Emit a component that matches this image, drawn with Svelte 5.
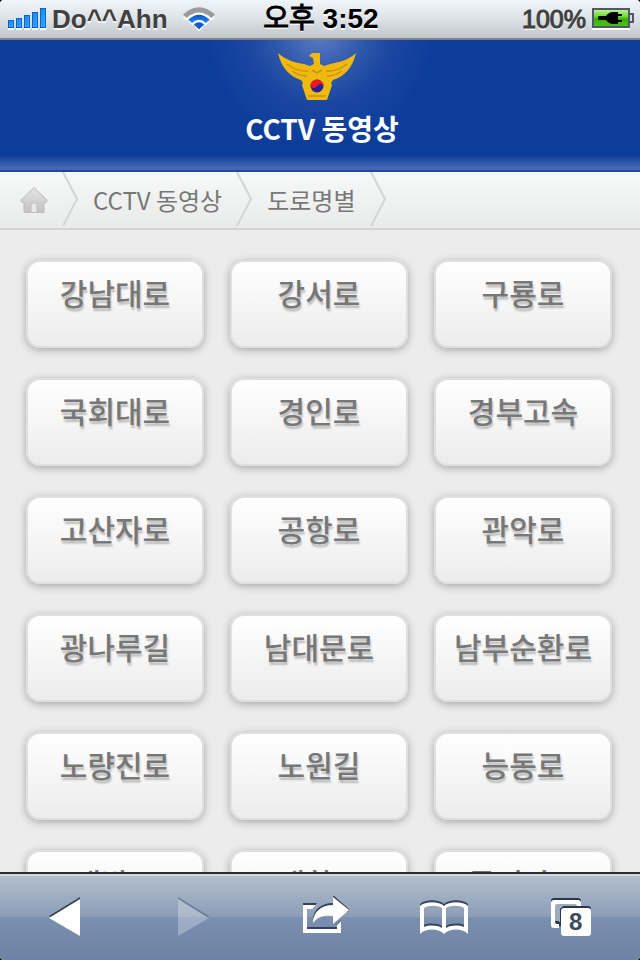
<script>
  const roads = [
    '강남대로', '강서로', '구룡로',
    '국회대로', '경인로', '경부고속',
    '고산자로', '공항로', '관악로',
    '광나루길', '남대문로', '남부순환로',
    '노량진로', '노원길', '능동로',
    '대방로', '대학로', '독서당로'
  ];
</script>

<div class="screen">
  <div class="status">
    <div class="carrier">
      <svg width="40" height="22" viewBox="0 0 40 22" aria-hidden="true">
        <defs>
          <linearGradient id="bars" x1="0" y1="0" x2="1" y2="1">
            <stop offset="0" stop-color="#1482ee" />
            <stop offset="1" stop-color="#30b4fa" />
          </linearGradient>
        </defs>
        <g fill="#fff">
          <rect x="0" y="20" width="6" height="2" /><rect x="8" y="20" width="6" height="2" />
          <rect x="16" y="20" width="6" height="2" /><rect x="24" y="20" width="6" height="2" />
          <rect x="32" y="20" width="6" height="2" />
        </g>
        <g fill="url(#bars)" stroke="#0d63cf">
          <rect x=".5" y="12.5" width="5" height="7" />
          <rect x="8.5" y="10.5" width="5" height="9" />
          <rect x="16.5" y="7.5" width="5" height="12" />
          <rect x="24.5" y="4.5" width="5" height="15" />
          <rect x="32.5" y=".5" width="5" height="19" />
        </g>
      </svg>
      <span class="name">Do^^Ahn</span>
      <svg width="34" height="26" viewBox="0 0 34 26" aria-hidden="true">
        <defs>
          <linearGradient id="wave" x1="0" y1="0" x2="0" y2="1">
            <stop offset="0" stop-color="#0b55c4" />
            <stop offset="1" stop-color="#1b8bff" />
          </linearGradient>
        </defs>
        <g fill="#fff" transform="translate(0 2)">
          <path d="M1 9 Q17 -6 33 9 L29 13 Q17 2 5 13Z" />
          <path d="M7 14 Q17 4 27 14 L23.5 17.5 Q17 11 10.5 17.5Z" />
          <path d="M12.5 19 Q17 14.5 21.5 19 L17 23.5Z" />
        </g>
        <path d="M1 8.5 Q17 -6 33 8.5 L29.5 12 Q17 1 4.5 12Z" fill="#9b9b9b" />
        <path d="M6.5 13.5 Q17 4 27.5 13.5 L24 17 Q17 10.5 10 17Z" fill="url(#wave)" />
        <path d="M12 18.5 Q17 14 22 18.5 L17 23.5Z" fill="#0f5cd0" />
      </svg>
    </div>
    <div class="time"><span class="ampm">오후</span> 3:52</div>
    <div class="power">
      <span>100%</span>
      <svg width="42" height="22" viewBox="0 0 42 22" aria-hidden="true">
        <defs>
          <linearGradient id="charge" x1="0" y1="0" x2="0" y2="1">
            <stop offset="0" stop-color="#c4f99c" />
            <stop offset=".45" stop-color="#65d52c" />
            <stop offset=".55" stop-color="#35b000" />
            <stop offset="1" stop-color="#4fc71c" />
          </linearGradient>
        </defs>
        <rect x="0" y="20" width="38" height="2" fill="#fff" />
        <rect x="1" y="1" width="36" height="18" fill="url(#charge)" stroke="#51566a" stroke-width="2" />
        <path d="M38 6h3v8h-3" fill="#d7dce0" stroke="#51566a" stroke-width="2" />
        <path d="M6 9Q6 8 8 8H14Q17 4 21 4H26V6H30V8H26V12H30V14H26V16H21Q17 16 14 12H8Q6 12 6 11Z" fill="#000" />
      </svg>
    </div>
  </div>

  <header>
    <svg width="80" height="50" viewBox="0 0 80 50" aria-hidden="true">
      <path d="M1 1C10 9 20 11 27 12L33 14 37 12 36 6 32 4 35 1 43 1V12L47 14 53 12C62 10 70 9 79 1C76 15 67 25 56 28L54 31 55 33 50 48H30L25 33 26 31 24 28C13 25 4 15 1 1Z" fill="#f0b90f" />
      <path d="M10 12Q20 20 31 19M15 19Q22 24 30 24M70 12Q60 20 49 19M65 19Q58 24 50 24M35 18L40 21 45 18M31 44H49" fill="none" stroke="#c8940e" stroke-width="1.5" />
      <circle cx="40" cy="34" r="6.5" fill="#25219a" />
      <path d="M33.5 34A6.5 6.5 0 0 1 46.5 34Q43 30 40 34T33.5 34Z" fill="#ed171f" />
    </svg>
    <h1>CCTV 동영상</h1>
  </header>

  <nav class="crumbs">
    <a class="home" href="#home" aria-label="Home">
      <svg width="30" height="28" viewBox="0 0 30 28" aria-hidden="true">
        <defs>
          <linearGradient id="house" x1="0" y1="0" x2="0" y2="1">
            <stop offset="0" stop-color="#e4e4e4" />
            <stop offset="1" stop-color="#c2c2c2" />
          </linearGradient>
        </defs>
        <path d="M15 1.5L28.5 14.5 27 16.5H25V26.5H5V16.5H3L1.5 14.5Z" fill="url(#house)" stroke="#bdbdbd" />
        <path d="M12 26V17H18V26" fill="#e9e9e9" stroke="#bdbdbd" />
      </svg>
    </a>
    <svg class="sep" width="18" height="54" viewBox="0 0 18 54" aria-hidden="true"><path d="M1 0L15 27 1 54" /></svg>
    <a href="#cctv">CCTV 동영상</a>
    <svg class="sep" width="18" height="54" viewBox="0 0 18 54" aria-hidden="true"><path d="M1 0L15 27 1 54" /></svg>
    <a href="#roads">도로명별</a>
    <svg class="sep" width="18" height="54" viewBox="0 0 18 54" aria-hidden="true"><path d="M1 0L15 27 1 54" /></svg>
  </nav>

  <main>
    {#each roads as road}
      <button class="road">{road}</button>
    {/each}
  </main>

  <footer>
    <button aria-label="Back">
      <svg width="34" height="42" viewBox="0 0 34 42" aria-hidden="true">
        <path d="M1 20L32 1V38Z" fill="#33435c" /><path d="M1 22L32 3V40Z" fill="#fff" />
      </svg>
    </button>
    <button aria-label="Forward" disabled>
      <svg width="34" height="42" viewBox="0 0 34 42" aria-hidden="true">
        <path d="M3 1L34 20 33 22 3 3Z" fill="#6c7f9b" /><path d="M3 3L34 22 3 40Z" fill="#fff" fill-opacity=".28" />
      </svg>
    </button>
    <button aria-label="Share">
      <svg width="64" height="42" viewBox="-15 0 64 42" aria-hidden="true">
        <path d="M2 7H16L14 10H2ZM6 31H36V34H6ZM36 28L40 24V28L36 32Z" fill="#33435c" />
        <path d="M2 9H15L11 13H6V33H36V29L40 25V37H2Z" fill="#fff" />
        <path d="M32 -1L48 13 47 16 32 10Q14 10 13 26L12 24C12 14 20 7 32 7Z" fill="#33435c" />
        <path d="M32 1L48 14 32 28V20C24 19 17 20 12 27C12 16 20 9 32 9Z" fill="#fff" />
      </svg>
    </button>
    <button aria-label="Bookmarks">
      <svg width="50" height="42" viewBox="0 0 50 42" aria-hidden="true">
        <g fill-rule="evenodd">
          <path transform="translate(0 -2)" fill="#33435c" d="M1 10C6 5 20 5 25 10C30 5 44 5 49 10V38C44 32 30 32 25 38C20 32 6 32 1 38ZM5 12V31C10 29 18 29 23 32V12C19 9 9 9 5 12ZM27 12V32C32 29 40 29 45 31V12C41 9 31 9 27 12Z" />
          <path fill="#fff" d="M1 10C6 5 20 5 25 10C30 5 44 5 49 10V38C44 32 30 32 25 38C20 32 6 32 1 38ZM5 12V31C10 29 18 29 23 32V12C19 9 9 9 5 12ZM27 12V32C32 29 40 29 45 31V12C41 9 31 9 27 12Z" />
        </g>
      </svg>
    </button>
    <button class="pages" aria-label="8 pages">
      <svg width="42" height="42" viewBox="0 0 42 42" aria-hidden="true">
        <rect x="1" y="2" width="30" height="28" rx="3" fill="#2b3647" />
        <path fill="#fff" fill-rule="evenodd" d="M4 4H28Q31 4 31 7V12H9V32H4Q1 32 1 29V7Q1 4 4 4Z" />
        <path fill="#9dabbd" d="M7 8H25Q27 8 27 10H14Q10 10 10 14V26H5V10Q5 8 7 8Z" />
        <path fill="#2b3647" d="M5 25H9V28H7Q5 28 5 25Z" />
        <rect x="11" y="10" width="30" height="20" rx="3" fill="#2b3647" />
        <rect x="11" y="12" width="30" height="28" rx="3" fill="#fff" />
      </svg>
      <span>8</span>
    </button>
  </footer>
</div>

<style>
  :global(body) {
    margin: 0;
    background: #000;
  }

  .screen {
    display: flex;
    flex-direction: column;
    height: 100vh;
    overflow: hidden;
    border-radius: 4px;
    background: #ececec;
    font-family: "Liberation Sans", "Noto Sans CJK KR", sans-serif;
  }

  .status {
    box-sizing: border-box;
    flex: none;
    display: grid;
    grid-template-columns: 1fr auto 1fr;
    align-items: center;
    height: 40px;
    padding: 0 6px 0 8px;
    border-bottom: 2px solid #7d8385;
    background: linear-gradient(#eff5f8, #dce2e5 50%, #c0c6c9);
    color: #404040;
    font-size: 26px;
    font-weight: 700;
    line-height: 36px;
    text-shadow: 0 2px 0 #f4f6f7;
    white-space: nowrap;
  }

  .carrier, .power {
    display: flex;
    align-items: center;
  }

  .carrier {
    gap: 4px;
  }

  .carrier .name {
    padding-right: 10px;
  }

  .time {
    color: #000;
    font-size: 28px;
  }

  .ampm {
    font-weight: 400;
    -webkit-text-stroke: 1px;
  }

  .power {
    justify-content: flex-end;
    gap: 6px;
    font-size: 25px;
    font-weight: 400;
    -webkit-text-stroke: 1px;
  }

  header {
    box-sizing: border-box;
    flex: none;
    display: flex;
    flex-direction: column;
    align-items: center;
    height: 132px;
    padding: 12px 0 0;
    border-bottom: 2px solid #1c48a4;
    background:
      linear-gradient(transparent 115px, #4668b4 128px),
      radial-gradient(circle at 50% -10px, #5e80c6 0, #4468b6b0 40px, #2c54aa60 75px, #0d3d9b00 115px),
      #0d3d9b;
  }

  header svg {
    display: block;
    margin-right: 6px;
  }

  h1 {
    margin: 7px 0 0;
    padding-left: 4px;
    color: #fff;
    font: 700 28px/38px "Noto Sans CJK KR", sans-serif;
    white-space: nowrap;
  }

  .crumbs {
    box-sizing: border-box;
    flex: none;
    display: flex;
    height: 58px;
    padding-left: 19px;
    border-bottom: 2px solid #d2d4d3;
    background: linear-gradient(#f7f9f8, #e9ebea);
  }

  .crumbs a {
    padding: 0 14px 0 13px;
    color: #777;
    font: 400 24px/56px "Noto Sans CJK KR", sans-serif;
    text-decoration: none;
    white-space: nowrap;
  }

  .crumbs .home {
    display: flex;
    align-items: center;
    padding: 0 13px 0 0;
  }

  .sep {
    fill: none;
    stroke: #d4d6d5;
    stroke-width: 2;
  }

  main {
    flex: 1;
    min-height: 0;
    overflow: hidden;
    display: grid;
    grid-template-columns: repeat(3, 1fr);
    grid-auto-rows: 88px;
    gap: 30px 26px;
    padding: 30px 28px 0 26px;
  }

  .road {
    display: flex;
    justify-content: center;
    align-items: flex-start;
    padding: 8px 0 0;
    border: 2px solid #dfdfdf;
    border-radius: 14px;
    background: linear-gradient(#fff, #ececec);
    box-shadow: 0 2px 8px #0000004d;
    color: #777;
    font: 500 30px/44px "Noto Sans CJK KR", sans-serif;
    text-shadow: 1px 3px 2px #bbb;
    white-space: nowrap;
  }

  footer {
    box-sizing: border-box;
    flex: none;
    display: grid;
    grid-template-columns: repeat(5, 1fr);
    justify-items: center;
    align-items: center;
    height: 88px;
    padding: 0 6px 0 2px;
    border-top: 2px solid #2d2d32;
    box-shadow: inset 0 2px 0 #d0d8e0;
    background: linear-gradient(#b4c0ce, #8b9db6 50%, #7b90af 50%, #6d82a4);
  }

  footer button {
    display: block;
    padding: 0;
    border: 0;
    background: none;
  }

  footer svg {
    display: block;
  }

  .pages {
    position: relative;
  }

  .pages span {
    position: absolute;
    inset: 12px 1px 2px 11px;
    color: #3c4a5e;
    font: 700 24px/28px "Liberation Sans", sans-serif;
    text-align: center;
  }
</style>
